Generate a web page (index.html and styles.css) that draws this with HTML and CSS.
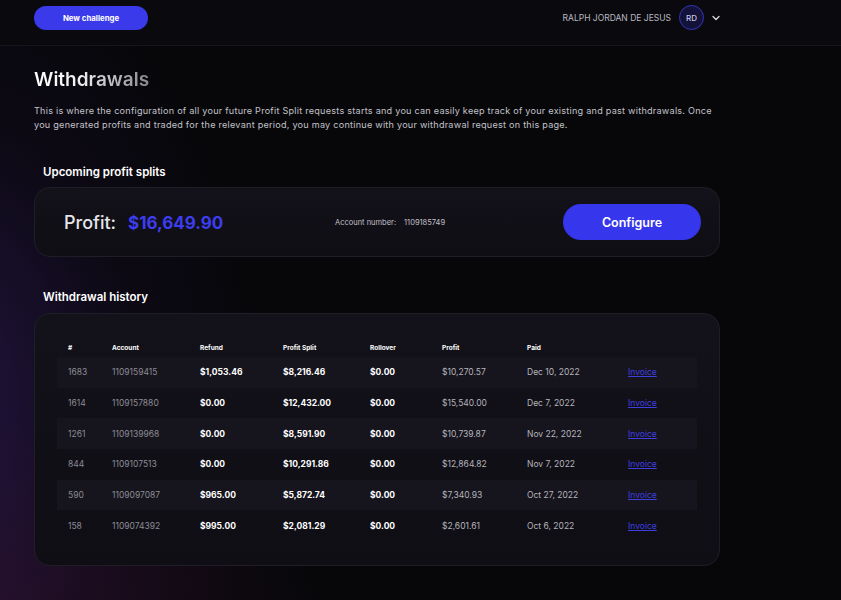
FILE: index.html
```html
<!DOCTYPE html>
<html lang="en">
<head>
<meta charset="utf-8">
<title>Withdrawals</title>
<link rel="stylesheet" href="styles.css">
</head>
<body>
<div class="page">
  <header class="topbar">
    <button class="btn-new">New challenge</button>
    <div class="user">
      <span class="user-name">RALPH JORDAN DE JESUS</span>
      <span class="avatar">RD</span>
      <svg class="chev" width="8" height="6" viewBox="0 0 8 6"><path d="M1 1.5 L4 4.5 L7 1.5" fill="none" stroke="#ddd" stroke-width="1.3" stroke-linecap="round" stroke-linejoin="round"/></svg>
    </div>
  </header>
  <main class="content">
    <h1 class="title">Withdrawals</h1>
    <p class="intro">This is where the configuration of all your future Profit Split requests starts and you can easily keep track of your existing and past withdrawals. Once you generated profits and traded for the relevant period, you may continue with your withdrawal request on this page.</p>

    <h2 class="section-title">Upcoming profit splits</h2>
    <section class="card profit-card">
      <div class="profit">
        <span class="profit-label">Profit:</span>
        <span class="profit-value">$16,649.90</span>
      </div>
      <div class="account">
        <span>Account number:</span>
        <span>1109185749</span>
      </div>
      <button class="btn-config">Configure</button>
    </section>

    <h2 class="section-title history-title">Withdrawal history</h2>
    <section class="card history-card">
      <table class="history">
        <thead>
          <tr><th>#</th><th>Account</th><th>Refund</th><th>Profit Split</th><th>Rollover</th><th>Profit</th><th>Paid</th><th></th></tr>
        </thead>
        <tbody>
          <tr><td class="muted">1683</td><td class="muted">1109159415</td><td class="strong">$1,053.46</td><td class="strong">$8,216.46</td><td class="strong">$0.00</td><td class="soft">$10,270.57</td><td class="soft">Dec 10, 2022</td><td><a href="#">Invoice</a></td></tr>
          <tr><td class="muted">1614</td><td class="muted">1109157880</td><td class="strong">$0.00</td><td class="strong">$12,432.00</td><td class="strong">$0.00</td><td class="soft">$15,540.00</td><td class="soft">Dec 7, 2022</td><td><a href="#">Invoice</a></td></tr>
          <tr><td class="muted">1261</td><td class="muted">1109139968</td><td class="strong">$0.00</td><td class="strong">$8,591.90</td><td class="strong">$0.00</td><td class="soft">$10,739.87</td><td class="soft">Nov 22, 2022</td><td><a href="#">Invoice</a></td></tr>
          <tr><td class="muted">844</td><td class="muted">1109107513</td><td class="strong">$0.00</td><td class="strong">$10,291.86</td><td class="strong">$0.00</td><td class="soft">$12,864.82</td><td class="soft">Nov 7, 2022</td><td><a href="#">Invoice</a></td></tr>
          <tr><td class="muted">590</td><td class="muted">1109097087</td><td class="strong">$965.00</td><td class="strong">$5,872.74</td><td class="strong">$0.00</td><td class="soft">$7,340.93</td><td class="soft">Oct 27, 2022</td><td><a href="#">Invoice</a></td></tr>
          <tr><td class="muted">158</td><td class="muted">1109074392</td><td class="strong">$995.00</td><td class="strong">$2,081.29</td><td class="strong">$0.00</td><td class="soft">$2,601.61</td><td class="soft">Oct 6, 2022</td><td><a href="#">Invoice</a></td></tr>
        </tbody>
      </table>
    </section>
  </main>
</div>
</body>
</html>
```
FILE: styles.css
```css
* { box-sizing: border-box; }
html, body { margin: 0; padding: 0; }
body {
  font-family: "Inter", "Open Sans", sans-serif;
  background: #07070a;
  color: #fff;
  width: 841px;
  height: 600px;
  overflow: hidden;
}
.page {
  height: 600px;
  background:
    radial-gradient(ellipse 320px 460px at -60px 400px, rgba(62, 34, 118, 0.5), rgba(40, 20, 70, 0.18) 60%, rgba(0,0,0,0) 100%),
    radial-gradient(ellipse 320px 200px at 0px 610px, rgba(80, 22, 64, 0.35), rgba(0,0,0,0) 100%),
    #07070a;
}
.topbar {
  height: 46px;
  display: flex;
  align-items: center;
  justify-content: space-between;
  padding: 0 121px 0 34px;
  background: #0a0a0e;
  border-bottom: 1px solid #16151c;
}
.btn-new {
  width: 114px;
  height: 24px;
  margin-top: -10px;
  border: none;
  border-radius: 12px;
  background: #3a3aea;
  color: #fff;
  font-family: inherit;
  font-size: 7.8px;
  font-weight: 700;
}
.user {
  display: flex;
  align-items: center;
  margin-top: -10px;
}
.user-name {
  font-size: 8.5px;
  color: #b8b8c0;
}
.avatar {
  width: 25px;
  height: 25px;
  margin-left: 8px;
  border-radius: 50%;
  border: 1px solid #3434b8;
  background: #12123a;
  color: #c8c8e0;
  font-size: 8px;
  font-weight: 500;
  display: flex;
  align-items: center;
  justify-content: center;
}
.chev { margin-left: 8px; }

.content {
  padding: 0 121px 0 34px;
}
.title {
  margin: 22px 0 0;
  font-size: 19px;
  font-weight: 600;
  line-height: 24px;
  background: linear-gradient(90deg, #ffffff 0%, #f0f0f0 40%, #88888e 100%);
  -webkit-background-clip: text;
  background-clip: text;
  color: transparent;
  display: inline-block;
}
.intro {
  margin: 12px 0 0;
  font-size: 9.1px;
  letter-spacing: 0.24px;
  line-height: 14px;
  color: #c2c2c8;
  width: 686px;
}
.section-title {
  margin: 33px 0 0 9px;
  font-size: 11.5px;
  font-weight: 600;
  line-height: 14px;
  color: #fff;
}
.card {
  border-radius: 16px;
  border: 1px solid #1f1e26;
  background: linear-gradient(180deg, #131119 0%, #0f0e14 100%);
}
.profit-card {
  margin-top: 8px;
  height: 70px;
  display: flex;
  align-items: center;
  padding: 0 18px 0 29px;
}
.profit {
  display: flex;
  align-items: baseline;
  width: 271px;
}
.profit-label {
  font-size: 18px;
  font-weight: 500;
  color: #e6e6ea;
}
.profit-value {
  margin-left: 12px;
  font-size: 17px;
  font-weight: 700;
  color: #3d3df0;
}
.account {
  display: flex;
  gap: 8px;
  font-size: 7.5px;
  color: #c0c0c8;
}
.btn-config {
  margin-left: auto;
  width: 138px;
  height: 36px;
  border: none;
  border-radius: 18px;
  background: #3636ec;
  color: #fff;
  font-family: inherit;
  font-size: 12.5px;
  font-weight: 600;
}
.history-title { margin-top: 33px; }
.history-card {
  margin-top: 9px;
  height: 253px;
  padding: 30px 22px 0 22px;
}
.history {
  width: 100%;
  border-collapse: collapse;
}
.history th {
  text-align: left;
  font-size: 6.5px;
  font-weight: 700;
  color: #fff;
  height: 13px;
  line-height: 8px;
  padding: 0 0 0 11px;
  vertical-align: top;
}
.history td {
  height: 30.7px;
  font-size: 8.5px;
  padding: 0 0 0 11px;
  vertical-align: middle;
}
.history tbody tr:nth-child(odd) td { background: #16141c; }
.history th:nth-child(1) { width: 44px; }
.history th:nth-child(2) { width: 88px; }
.history th:nth-child(3) { width: 83px; }
.history th:nth-child(4) { width: 87px; }
.history th:nth-child(5) { width: 72px; }
.history th:nth-child(6) { width: 85px; }
.history th:nth-child(7) { width: 101px; }
.muted { color: #8c8c96; }
.strong { color: #fff; font-weight: 700; }
.soft { color: #b4b4bc; }
.history a {
  color: #3f3fe0;
  text-decoration: underline;
  font-size: 8.5px;
}
```
